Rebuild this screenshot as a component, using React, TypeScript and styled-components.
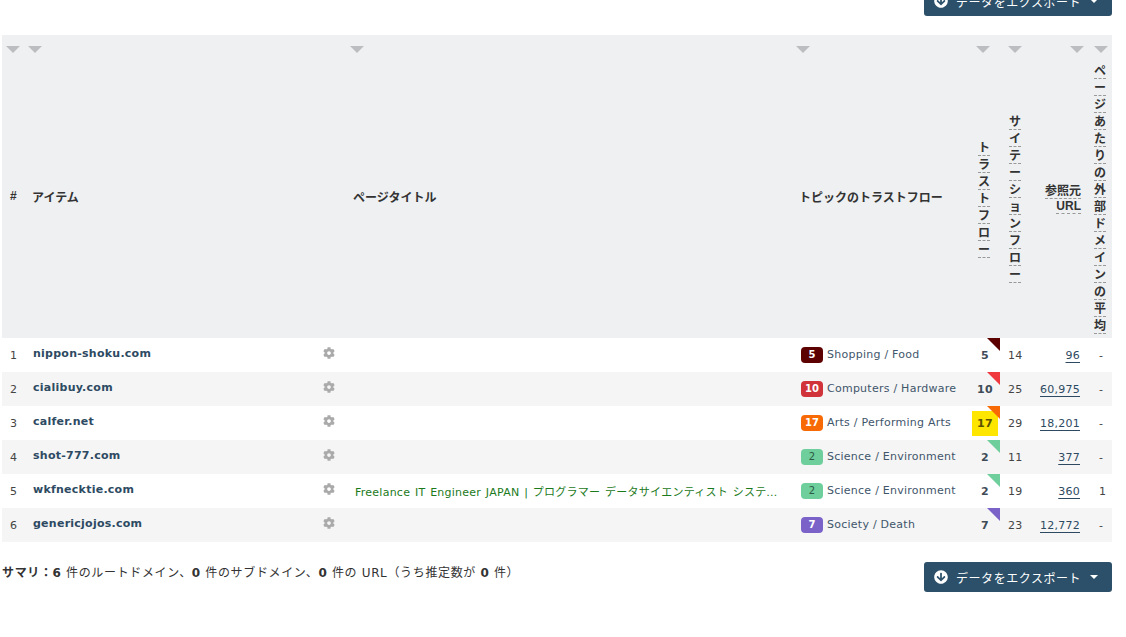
import React from "react"
import styled, { createGlobalStyle } from "styled-components"
import { FaArrowCircleDown, FaCog } from "react-icons/fa"

const FONT = `"DejaVu Sans", Verdana, "Noto Sans CJK JP", sans-serif`
const HEAD_FONT = `"Liberation Sans", Arial, "Noto Sans CJK JP", sans-serif`

const GlobalStyle = createGlobalStyle`
  html, body {
    margin: 0;
    padding: 0;
    background: #fff;
    overflow: hidden;
  }
  body {
    font-family: ${FONT};
    font-size: 11px;
    color: #333;
  }
`

const Page = styled.div`
  width: 1110px;
  margin: -14px 0 0 2px;
`

const TopBar = styled.div`
  display: flex;
  justify-content: flex-end;
  margin-bottom: 19px;
`

const ExportButton = styled.button`
  display: flex;
  align-items: center;
  width: 188px;
  height: 30px;
  padding: 0 0 0 10px;
  border: 0;
  border-radius: 3px;
  background: #2c5069;
  color: #fff;
  font-family: ${FONT};
  font-size: 12px;
  letter-spacing: 0.55px;
  svg {
    flex: none;
    margin-right: 8px;
  }
`

const Caret = styled.span`
  width: 0;
  height: 0;
  margin-left: 9px;
  border-left: 4px solid transparent;
  border-right: 4px solid transparent;
  border-top: 4px solid #fff;
`

const Table = styled.table`
  width: 1110px;
  table-layout: fixed;
  border-collapse: collapse;
  border-spacing: 0;
`

const HeadRow = styled.tr`
  background: #eef0f2;
`

const HeadCell = styled.th<{ $align?: string; $pad?: number; $lift?: number }>`
  position: relative;
  height: 303px;
  padding: 28px ${p => (p.$align === "right" ? 9 : 0)}px ${p => 3 + (p.$lift ?? 0)}px ${p => p.$pad ?? 0}px;
  box-sizing: border-box;
  text-align: ${p => p.$align ?? "left"};
  vertical-align: middle;
  font-family: ${HEAD_FONT};
  font-size: 12px;
  font-weight: bold;
  line-height: 15px;
  color: #333;
`

const SortArrow = styled.span<{ $left: number }>`
  position: absolute;
  top: 11px;
  left: ${p => p.$left}px;
  width: 0;
  height: 0;
  border-left: 7px solid transparent;
  border-right: 7px solid transparent;
  border-top: 7px solid #bcbdc0;
`

const VerticalWrap = styled.div<{ $left: number }>`
  width: 14px;
  margin-left: ${p => p.$left}px;
  line-height: 17px;
  word-break: break-all;
`

const Hint = styled.span`
  border-bottom: 1px dashed #999;
`

const Row = styled.tr<{ $alt: boolean }>`
  height: 34px;
  background: ${p => (p.$alt ? "#f5f5f5" : "#fff")};
`

const Cell = styled.td`
  padding: 0;
  vertical-align: middle;
  font-size: 11px;
  letter-spacing: 0.25px;
  color: #444;
`

const NumberCell = styled(Cell)`
  padding-left: 8px;
`

const Domain = styled.a`
  display: inline-block;
  font-weight: bold;
  color: #2d4a62;
`

const ActionCell = styled(Cell)`
  display: flex;
  height: 34px;
  align-items: center;
  justify-content: space-between;
  padding: 0 0 4px 9px;
  box-sizing: border-box;
  svg {
    flex: none;
    color: #aaa;
    margin-right: 11px;
  }
`

const TitleCell = styled(Cell)`
  padding: 0 12px 0 9px;
  overflow: hidden;
  white-space: nowrap;
  text-overflow: ellipsis;
  letter-spacing: 0.25px;
  word-spacing: 1px;
  color: #1b7a1b;
`

const TopicCell = styled(Cell)`
  padding-left: 9px;
  white-space: nowrap;
  color: #3f566b;
`

const Badge = styled.span<{ $bg: string; $dark?: boolean }>`
  display: inline-block;
  width: 22px;
  height: 16px;
  margin-right: 4px;
  border-radius: 4px;
  background: ${p => p.$bg};
  color: ${p => (p.$dark ? "#2d5a45" : "#fff")};
  font-size: 10px;
  font-weight: ${p => (p.$dark ? "normal" : "bold")};
  letter-spacing: 0;
  line-height: 16px;
  text-align: center;
  vertical-align: middle;
`

const FlowCell = styled(Cell)`
  position: relative;
  text-align: center;
  padding-right: 2px;
  font-weight: bold;
  color: #3f4c58;
`

const FlowValue = styled.span<{ $hot?: boolean }>`
  display: inline-block;
  width: 26px;
  height: 25px;
  line-height: 25px;
  background: ${p => (p.$hot ? "#ffe600" : "transparent")};
  color: ${p => (p.$hot ? "#5a5200" : "inherit")};
`

const Corner = styled.span<{ $color: string }>`
  position: absolute;
  top: 0;
  right: 2px;
  width: 0;
  height: 0;
  border-top: 13px solid ${p => p.$color};
  border-left: 13px solid transparent;
`

const CitationCell = styled(Cell)`
  padding-left: 6px;
`

const RefCell = styled(Cell)`
  padding-right: 10px;
  text-align: right;
`

const RefLink = styled.a`
  color: #2d4a62;
  text-decoration: underline;
  text-underline-offset: 3px;
`

const AvgCell = styled(Cell)`
  padding-left: 9px;
`

const Footer = styled.div`
  display: flex;
  justify-content: space-between;
  align-items: flex-start;
  margin-top: 20px;
`

const Summary = styled.div`
  padding-top: 3px;
  font-size: 12px;
  line-height: 16px;
  letter-spacing: 0.65px;
  color: #333;
  b {
    font-weight: bold;
  }
`

type Item = {
  domain: string
  title?: string
  topic: string
  tf: number
  color: string
  corner?: string
  dark?: boolean
  hot?: boolean
  cf: number
  refs: string
  avg: string
}

const items: Item[] = [
  { domain: "nippon-shoku.com", topic: "Shopping / Food", tf: 5, color: "#5c0000", cf: 14, refs: "96", avg: "-" },
  { domain: "cialibuy.com", topic: "Computers / Hardware", tf: 10, color: "#d0333a", corner: "#f0393e", cf: 25, refs: "60,975", avg: "-" },
  { domain: "calfer.net", topic: "Arts / Performing Arts", tf: 17, color: "#f76a05", hot: true, cf: 29, refs: "18,201", avg: "-" },
  { domain: "shot-777.com", topic: "Science / Environment", tf: 2, color: "#6ecf9c", dark: true, cf: 11, refs: "377", avg: "-" },
  {
    domain: "wkfnecktie.com",
    title: "Freelance IT Engineer JAPAN | プログラマー データサイエンティスト システムエンジニア",
    topic: "Science / Environment",
    tf: 2,
    color: "#6ecf9c",
    dark: true,
    cf: 19,
    refs: "360",
    avg: "1",
  },
  { domain: "genericjojos.com", topic: "Society / Death", tf: 7, color: "#7b62c9", cf: 23, refs: "12,772", avg: "-" },
]

const ExportControl: React.FC = () => (
  <ExportButton>
    <FaArrowCircleDown size={14} />
    データをエクスポート
    <Caret />
  </ExportButton>
)

const App: React.FC = () => (
  <Page>
    <GlobalStyle />
    <TopBar>
      <ExportControl />
    </TopBar>
    <Table>
      <colgroup>
        <col style={{ width: 22 }} />
        <col style={{ width: 322 }} />
        <col style={{ width: 446 }} />
        <col style={{ width: 178 }} />
        <col style={{ width: 32 }} />
        <col style={{ width: 34 }} />
        <col style={{ width: 54 }} />
        <col style={{ width: 22 }} />
      </colgroup>
      <thead>
        <HeadRow>
          <HeadCell $pad={8} $lift={6}>
            <SortArrow $left={4} />#
          </HeadCell>
          <HeadCell $pad={8} $lift={2}>
            <SortArrow $left={4} />アイテム
          </HeadCell>
          <HeadCell $pad={7} $lift={2}>
            <SortArrow $left={4} />ページタイトル
          </HeadCell>
          <HeadCell $pad={7} $lift={2}>
            <SortArrow $left={4} />トピックのトラストフロー
          </HeadCell>
          <HeadCell>
            <SortArrow $left={6} />
            <VerticalWrap $left={8}>
              <Hint>トラストフロー</Hint>
            </VerticalWrap>
          </HeadCell>
          <HeadCell>
            <SortArrow $left={6} />
            <VerticalWrap $left={7}>
              <Hint>サイテーションフロー</Hint>
            </VerticalWrap>
          </HeadCell>
          <HeadCell $align="right">
            <SortArrow $left={34} />
            <Hint>参照元</Hint>
            <br />
            <Hint>URL</Hint>
          </HeadCell>
          <HeadCell>
            <SortArrow $left={4} />
            <VerticalWrap $left={4}>
              <Hint>ページあたりの外部ドメインの平均</Hint>
            </VerticalWrap>
          </HeadCell>
        </HeadRow>
      </thead>
      <tbody>
        {items.map((item, i) => (
          <Row key={item.domain} $alt={i % 2 === 1}>
            <NumberCell>{i + 1}</NumberCell>
            <ActionCell as="td">
              <Domain>{item.domain}</Domain>
              <FaCog size={12} />
            </ActionCell>
            <TitleCell>{item.title}</TitleCell>
            <TopicCell>
              <Badge $bg={item.color} $dark={item.dark}>
                {item.tf}
              </Badge>
              {item.topic}
            </TopicCell>
            <FlowCell>
              <FlowValue $hot={item.hot}>{item.tf}</FlowValue>
              <Corner $color={item.corner ?? item.color} />
            </FlowCell>
            <CitationCell>{item.cf}</CitationCell>
            <RefCell>
              <RefLink>{item.refs}</RefLink>
            </RefCell>
            <AvgCell>{item.avg}</AvgCell>
          </Row>
        ))}
      </tbody>
    </Table>
    <Footer>
      <Summary>
        <b>サマリ：6</b> 件のルートドメイン、<b>0</b> 件のサブドメイン、<b>0</b> 件の URL（うち推定数が <b>0</b> 件）
      </Summary>
      <ExportControl />
    </Footer>
  </Page>
)

export default App
